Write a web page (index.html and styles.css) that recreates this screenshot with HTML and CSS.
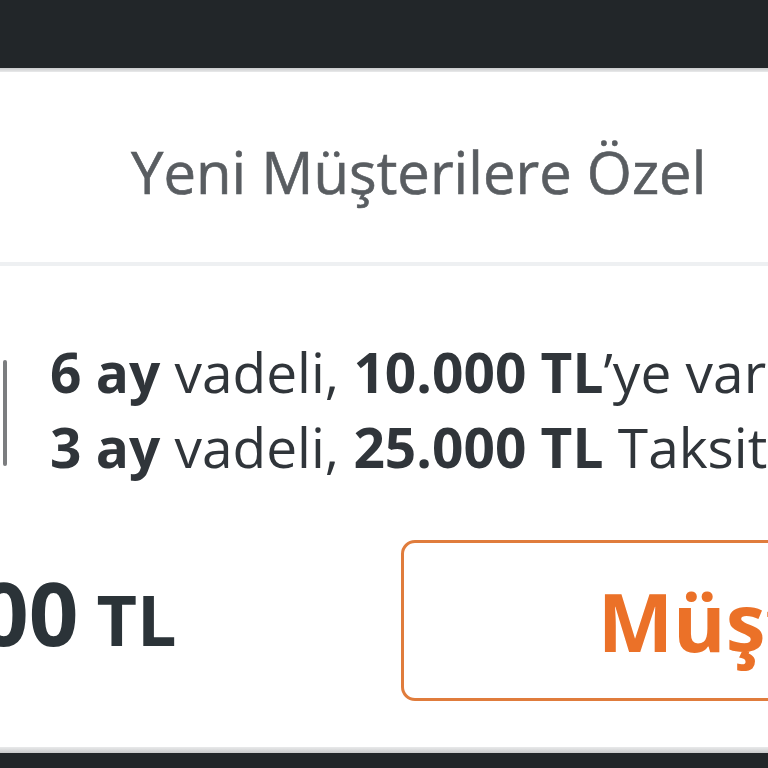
FILE: index.html
```html
<!DOCTYPE html>
<html lang="tr">
<head>
<meta charset="utf-8">
<title>Yeni Müşterilere Özel</title>
<link rel="stylesheet" href="styles.css">
</head>
<body>
<div class="page">
  <div class="topbar"></div>
  <div class="topshade"></div>
  <div class="card">
    <div class="header">
      <h1 class="title">Yeni Müşterilere Özel</h1>
    </div>
    <div class="divider"></div>
    <div class="offers">
      <div class="bar"></div>
      <div class="lines">
        <p class="line"><b>6 ay</b> vadeli, <b>10.000 TL</b>’ye varan Taksitli Nakit Avans</p>
        <p class="line"><b>3 ay</b> vadeli, <b>25.000 TL</b> Taksitli Nakit Avans</p>
      </div>
    </div>
    <div class="footer">
      <div class="price">25.000<span class="cur">TL</span></div>
      <button class="cta">Müşteri Ol</button>
    </div>
  </div>
  <div class="bottomshade"></div>
  <div class="bottombar"></div>
</div>
</body>
</html>
```
FILE: styles.css
```css
html, body {
  margin: 0;
  padding: 0;
  width: 768px;
  height: 768px;
  overflow: hidden;
  background: #ffffff;
  font-family: "Open Sans", "Noto Sans", sans-serif;
}
.page {
  display: flex;
  flex-direction: column;
  height: 768px;
  width: 768px;
  overflow: hidden;
}
.topbar {
  height: 68px;
  background: #222629;
  flex: none;
}
.topshade {
  height: 4px;
  flex: none;
  background: linear-gradient(#c9cacb, #e9eaeb);
}
.card {
  flex: 1;
  display: flex;
  flex-direction: column;
  background: #ffffff;
  min-height: 0;
}
.header {
  height: 190px;
  flex: none;
  display: flex;
  align-items: center;
  padding-left: 131px;
  padding-top: 9px;
  box-sizing: border-box;
}
.title {
  margin: 0;
  font-size: 58px;
  font-weight: 400;
  color: #595d61;
  white-space: nowrap;
  -webkit-text-stroke: 0.6px #595d61;
}
.divider {
  height: 4px;
  flex: none;
  background: #eef0f2;
}
.offers {
  display: flex;
  align-items: flex-start;
  margin-top: 68px;
  flex: none;
}
.bar {
  width: 4px;
  height: 106px;
  margin-left: 3px;
  margin-top: 26px;
  background: #7b7d7f;
  border-radius: 2px;
  flex: none;
}
.lines {
  margin-left: 43px;
}
.line {
  margin: 0;
  font-size: 55px;
  line-height: 75px;
  font-weight: 400;
  color: #30353a;
  white-space: nowrap;
}
.line b {
  font-weight: 700;
}
.footer {
  display: flex;
  align-items: center;
  height: 161px;
  margin-top: 56px;
  flex: none;
}
.price {
  margin-left: -195px;
  margin-bottom: 17px;
  font-size: 87px;
  font-weight: 700;
  color: #2b3338;
  white-space: nowrap;
  flex: none;
}
.cur {
  font-size: 70px;
  margin-left: 18px;
}
.cta {
  margin-left: 224px;
  height: 161px;
  width: 620px;
  flex: none;
  box-sizing: border-box;
  border: 3px solid #e07c3c;
  border-radius: 14px;
  background: #ffffff;
  font-family: "Open Sans", "Noto Sans", sans-serif;
  font-size: 80px;
  font-weight: 700;
  color: #eb7128;
  text-align: left;
  padding: 0 0 0 194px;
  white-space: nowrap;
}
.bottomshade {
  flex: none;
  height: 6px;
  background: linear-gradient(#e9eaeb, #c9cacb);
}
.bottombar {
  flex: none;
  height: 15px;
  background: #222629;
}
```
